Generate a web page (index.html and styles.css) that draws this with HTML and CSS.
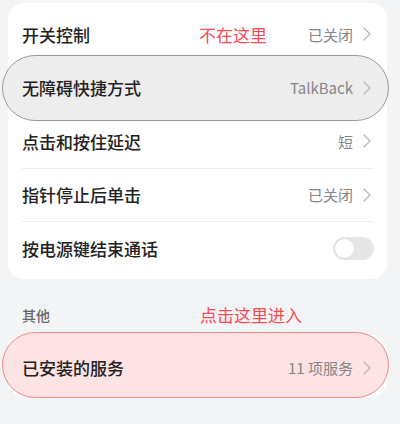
FILE: index.html
```html
<!DOCTYPE html>
<html lang="zh">
<head>
<meta charset="utf-8">
<link rel="stylesheet" href="styles.css">
</head>
<body>
<div class="page">
  <div class="card">
    <div class="row">
      <span class="title">开关控制</span>
      <span class="note note-row">不在这里</span>
      <span class="value">已关闭</span>
      <svg class="chev" viewBox="0 0 8 14" width="8" height="14"><polyline points="1,1 7,7 1,13"/></svg>
    </div>
    <div class="sep"></div>
    <div class="row row-gray">
      <span class="title">无障碍快捷方式</span>
      <span class="value">TalkBack</span>
      <svg class="chev" viewBox="0 0 8 14" width="8" height="14"><polyline points="1,1 7,7 1,13"/></svg>
    </div>
    <div class="sep"></div>
    <div class="row">
      <span class="title">点击和按住延迟</span>
      <span class="value">短</span>
      <svg class="chev" viewBox="0 0 8 14" width="8" height="14"><polyline points="1,1 7,7 1,13"/></svg>
    </div>
    <div class="sep"></div>
    <div class="row">
      <span class="title">指针停止后单击</span>
      <span class="value">已关闭</span>
      <svg class="chev" viewBox="0 0 8 14" width="8" height="14"><polyline points="1,1 7,7 1,13"/></svg>
    </div>
    <div class="sep"></div>
    <div class="row">
      <span class="title">按电源键结束通话</span>
      <span class="toggle"><span class="knob"></span></span>
    </div>
  </div>

  <div class="section-label">
    <span>其他</span>
    <span class="note note-label">点击这里进入</span>
  </div>

  <div class="card card-single">
    <div class="row row-pink">
      <span class="title">已安装的服务</span>
      <span class="value">11 项服务</span>
      <svg class="chev" viewBox="0 0 8 14" width="8" height="14"><polyline points="1,1 7,7 1,13"/></svg>
    </div>
  </div>
</div>
</body>
</html>
```

FILE: styles.css
```css
html, body {
  margin: 0;
  padding: 0;
}
body {
  background: #f3f4f6;
  font-family: "Noto Sans CJK SC", "Noto Sans", sans-serif;
  width: 400px;
  height: 424px;
  overflow: hidden;
}
.page {
  padding: 3px 13px 0 8px;
}
.card {
  background: #ffffff;
  border-radius: 16px;
  padding: 5px 0 4px;
}
.row {
  position: relative;
  isolation: isolate;
  height: 52.5px;
  display: flex;
  align-items: center;
  padding: 0 16px 0 14px;
}
.title {
  font-size: 17px;
  font-weight: 500;
  color: #222222;
  flex: 1;
  white-space: nowrap;
}
.value {
  font-size: 15px;
  color: #858585;
  margin-right: 10px;
  white-space: nowrap;
}
.chev {
  fill: none;
  stroke: #b8b8b8;
  stroke-width: 1.3;
  stroke-linecap: round;
  stroke-linejoin: round;
}
.sep {
  height: 1px;
  background: #ededed;
  margin: 0 13px 0 14px;
}
.note {
  position: absolute;
  color: #f84a55;
  font-size: 17px;
  white-space: nowrap;
}
.note-row {
  left: 191px;
  top: 50%;
  transform: translateY(-50%);
}
.row-gray::before {
  content: "";
  position: absolute;
  z-index: -1;
  left: -6px;
  right: -2px;
  top: -6.5px;
  bottom: -7px;
  background: #ededed;
  border: 1.5px solid #9a9a9a;
  border-radius: 34px;
}
.toggle {
  width: 41px;
  height: 23px;
  border-radius: 12px;
  background: #e6e6e6;
  margin-right: -3px;
  display: flex;
  align-items: center;
  padding: 0 2px;
  box-sizing: border-box;
}
.knob {
  width: 19px;
  height: 19px;
  border-radius: 50%;
  background: #ffffff;
  box-shadow: 0 0 1px rgba(0,0,0,0.15);
}
.section-label {
  position: relative;
  margin-top: 26px;
  height: 20px;
  line-height: 20px;
  padding-left: 14px;
  font-size: 14px;
  font-weight: 500;
  color: #666666;
}
.note-label {
  left: 192px;
  top: 50%;
  transform: translateY(-50%);
  line-height: 1.2;
  font-weight: 400;
}
.card-single {
  margin-top: 10px;
  padding: 0;
}
.row-pink {
  height: 62px;
  padding-top: 4px;
  box-sizing: border-box;
}
.row-pink::before {
  content: "";
  position: absolute;
  z-index: -1;
  left: -6px;
  right: -2px;
  top: -3px;
  bottom: -1px;
  background: #fde3e4;
  border: 1.5px solid #f28a8c;
  border-radius: 34px;
}
```
